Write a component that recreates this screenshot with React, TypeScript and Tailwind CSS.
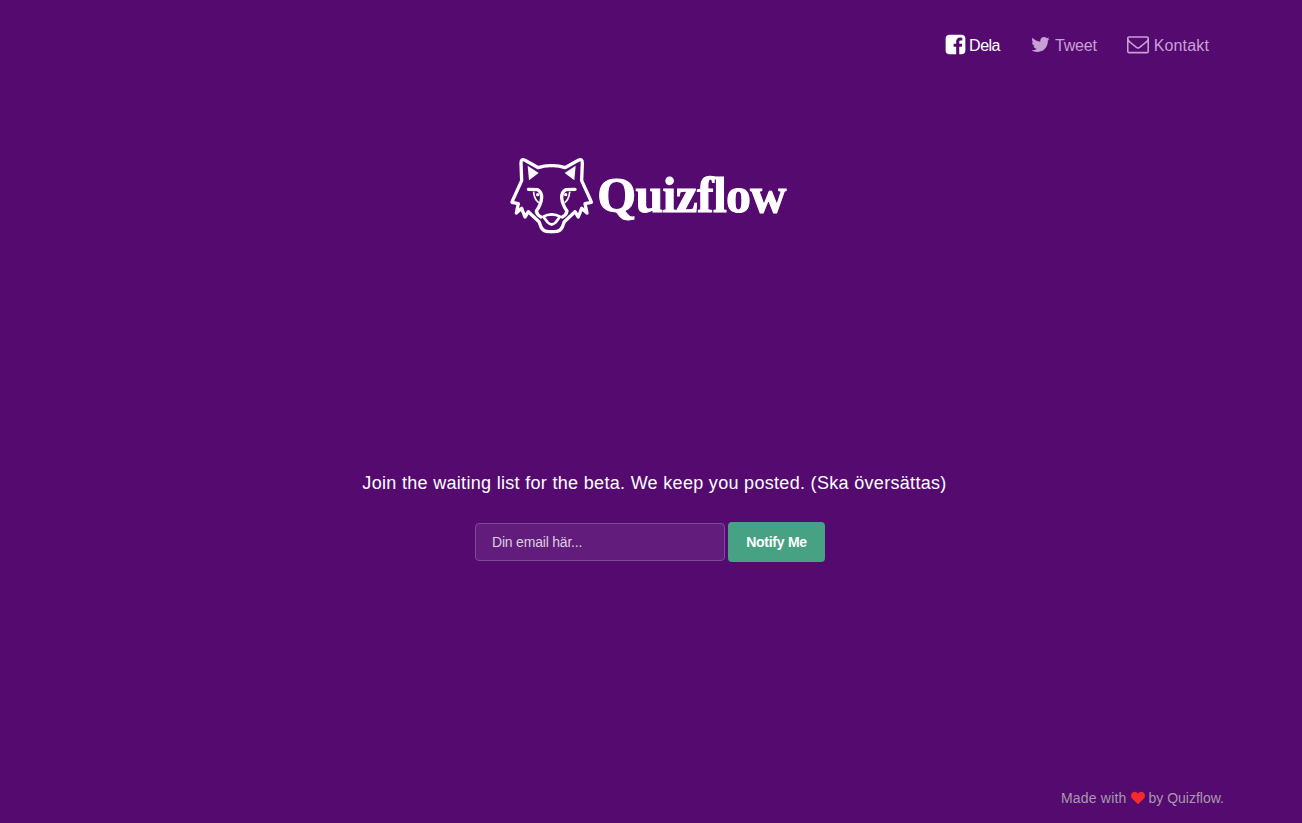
import { FaHeart } from 'react-icons/fa';

function WolfHalf() {
  return (
    <>
      {/* outline: ear, cheek fur, jaw */}
      <path d="M140 50 Q120 49 100 56 L60 34 Q48 28 48 42 L50 95 L24 152 L21 160 L40 164 L34 192 L50 178 L60 204 L70 188 L102 218 L108 234 Q114 248 132 248 L140 248" />
      <path d="M68 50 L101 72 L72 94 Z" fill="white" stroke="none" />
      {/* brow running round the eye and down to the snout */}
      <path d="M70 121 L98 122 Q110 128 110 146 Q108 168 94 186 Q96 198 108 204" />
      <path d="M86 130 Q88 150 100 160" strokeWidth="5" />
      <circle cx="98" cy="137" r="5" fill="white" stroke="none" />
      {/* snout */}
      <path d="M140 196 Q126 196 115 203 L128 220 Q134 226 140 226" strokeWidth="8" />
    </>
  );
}

function WolfLogo() {
  return (
    <svg viewBox="0 0 285 270" className="h-[90px] w-[95px] shrink-0" fill="none" stroke="white" strokeWidth="10" strokeLinejoin="round" strokeLinecap="round">
      <WolfHalf />
      <g transform="translate(280 0) scale(-1 1)">
        <WolfHalf />
      </g>
    </svg>
  );
}

// Font Awesome 4 glyphs, the package only has the newer cuts
function FacebookSquare() {
  return (
    <svg viewBox="0 0 1792 1792" className="h-[23px] w-[23px]" fill="currentColor">
      <path d="M1376 128q119 0 203.5 84.5t84.5 203.5v960q0 119-84.5 203.5t-203.5 84.5h-188v-595h199l30-232h-229v-148q0-56 23.5-84t91.5-28l122-1v-207q-63-9-178-9-136 0-217.5 80t-81.5 226v171h-200v232h200v595h-532q-119 0-203.5-84.5t-84.5-203.5v-960q0-119 84.5-203.5t203.5-84.5h960z" />
    </svg>
  );
}

function TwitterBird() {
  return (
    <svg viewBox="0 0 1792 1792" className="h-[21px] w-[21px]" fill="currentColor">
      <path d="M1684 408q-67 98-162 167 1 14 1 42 0 130-38 259.5t-115.5 248.5-184.5 210.5-258 146-323 54.5q-271 0-496-145 35 4 78 4 225 0 401-138-105-2-188-64.5t-114-159.5q33 5 61 5 43 0 85-11-112-23-185.5-111.5t-73.5-205.5v-4q68 38 146 41-66-44-105-115t-39-154q0-88 44-163 121 149 294.5 238.5t371.5 99.5q-8-38-8-74 0-134 94.5-228.5t228.5-94.5q140 0 236 102 109-21 201-76-35 108-127 164 92-10 184-50z" />
    </svg>
  );
}

function EnvelopeOutline() {
  return (
    <svg viewBox="0 0 1792 1792" className="h-[22px] w-[22px]" fill="currentColor">
      <path d="M1664 1504v-768q-32 36-69 66-268 206-426 338-51 43-83 67t-86.5 48.5-102.5 24.5h-2q-48 0-102.5-24.5t-86.5-48.5-83-67q-158-132-426-338-37-30-69-66v768q0 13 9.5 22.5t22.5 9.5h1472q13 0 22.5-9.5t9.5-22.5zm0-1051v-24.5l-.5-13-3-12.5-5.5-9-9-7.5-14-2.5h-1472q-13 0-22.5 9.5t-9.5 22.5q0 168 147 284 193 152 401 317 6 5 35 29.5t46 37.5 44.5 31.5 50.5 27.5 43 9h2q20 0 43-9t50.5-27.5 44.5-31.5 46-37.5 35-29.5q208-165 401-317 54-43 100.5-115.5t46.5-131.5zm128-37v1088q0 66-47 113t-113 47h-1472q-66 0-113-47t-47-113v-1088q0-66 47-113t113-47h1472q66 0 113 47t47 113z" />
    </svg>
  );
}

export default function App() {
  return (
    <div className="flex h-screen flex-col overflow-hidden bg-[#550a70] font-['Liberation_Sans',Arial,sans-serif] text-white">
      {/* top nav */}
      <nav className="flex justify-end gap-[30px] pr-[93px] pt-[32px] text-[16px] leading-[26px]">
        <a className="flex items-center gap-[2px]">
          <span className="-mt-[3px]"><FacebookSquare /></span>
          <span className="mt-[1px] tracking-[-0.5px]">Dela</span>
        </a>
        <a className="flex items-center gap-[4px] text-[#c9a0d4]">
          <span className="-mt-[3px]"><TwitterBird /></span>
          <span className="mt-[1px] tracking-[-0.2px]">Tweet</span>
        </a>
        <a className="flex items-center gap-[5px] text-[#c9a0d4]">
          <span className="-mt-[3px]"><EnvelopeOutline /></span>
          <span className="mt-[1px] tracking-[0.15px]">Kontakt</span>
        </a>
      </nav>

      {/* logo */}
      <div className="mt-[90px] flex justify-center pr-[11px]">
        <div className="flex items-center">
          <WolfLogo />
          <span className="-ml-[3px] mt-[1px] font-['Liberation_Serif',serif] text-[50px] leading-none font-bold tracking-[-0.75px] [-webkit-text-stroke:1px_white]">Quizflow</span>
        </div>
      </div>

      {/* signup */}
      <p className="mt-[231px] pl-[7px] text-center text-[18px] leading-[26px] tracking-[0.31px]">
        Join the waiting list for the beta. We keep you posted. (Ska översättas)
      </p>
      <form className="mt-[26px] flex items-center justify-center gap-[3px] pr-[2px]">
        <input
          placeholder="Din email här..."
          className="h-[38px] w-[250px] rounded-[4px] border border-[#7f4b93] bg-[#621c7b] px-[16px] text-[14px] tracking-[-0.2px] outline-none placeholder:text-[#dccfe2]"
        />
        <button type="button" className="h-[40px] w-[97px] rounded-[4px] bg-[#46a283] text-[14px] font-bold tracking-[-0.25px] text-white">
          Notify Me
        </button>
      </form>

      {/* footer */}
      <footer className="mt-auto flex items-center justify-end gap-[4px] pr-[78px] pb-[16px] text-[14px] leading-[18px] text-[#a79ba9]">
        <span className="tracking-[0.2px]">Made with</span>
        <FaHeart className="h-[14px] w-[14px] text-[#f52a2a]" />
        <span>by Quizflow.</span>
      </footer>
    </div>
  );
}
